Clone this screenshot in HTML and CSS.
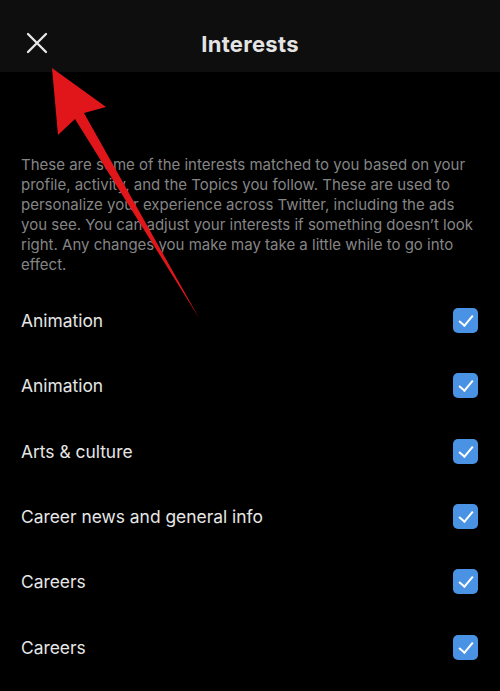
FILE: index.html
```html
<!DOCTYPE html>
<html lang="en">
<head>
  <meta charset="UTF-8" />
  <meta name="viewport" content="width=device-width, initial-scale=1.0" />
  <title>Interests</title>
  <link rel="stylesheet" href="styles.css">
</head>
<body>
  <header class="topbar">
    <button class="close" aria-label="Close">
      <svg width="22" height="22" viewBox="0 0 22 22">
        <path d="M2 2 L20 20 M20 2 L2 20" stroke="#e8e8e8" stroke-width="2.3" stroke-linecap="round" fill="none"/>
      </svg>
    </button>
    <h1>Interests</h1>
  </header>

  <p class="intro">These are some of the interests matched to you based on your profile, activity, and the Topics you follow. These are used to personalize your experience across Twitter, including the ads you see. You can adjust your interests if something doesn’t look right. Any changes you make may take a little while to go into effect.</p>

  <ul class="interests">
    <li><span>Animation</span><span class="check"></span></li>
    <li><span>Animation</span><span class="check"></span></li>
    <li><span>Arts &amp; culture</span><span class="check"></span></li>
    <li><span>Career news and general info</span><span class="check"></span></li>
    <li><span>Careers</span><span class="check"></span></li>
    <li><span>Careers</span><span class="check"></span></li>
  </ul>

  <!-- annotation arrow over the page -->
  <svg class="arrow" width="500" height="691" viewBox="0 0 500 691">
    <polygon points="52,68 106,107 84,113 199,318 75,119 58,135" fill="#e0161b"/>
  </svg>
</body>
</html>
```

FILE: styles.css
```css
body {
  margin: 0;
  background-color: #000;
  color: #e7e7e7;
  font-family: Inter, "Noto Sans", sans-serif;
  position: relative;
  height: 691px;
  overflow: hidden;
}

/* Header */
.topbar {
  height: 72px;
  box-sizing: border-box;
  padding-top: 16px;
  background-color: #0e0e0e;
  display: flex;
  align-items: center;
  justify-content: center;
  position: relative;
}

.topbar h1 {
  margin: 0;
  font-size: 22px;
  font-weight: 700;
  color: #e4e4e4;
  letter-spacing: 0.3px;
}

.close {
  position: absolute;
  left: 26px;
  top: 32px;
  padding: 0;
  border: none;
  background: none;
  width: 22px;
  height: 22px;
}

.close svg {
  display: block;
}

/* Intro text */
.intro {
  margin: 0;
  padding: 83px 21px 0;
  font-size: 15px;
  line-height: 20px;
  color: #858585;
}

/* Interest list */
.interests {
  list-style: none;
  margin: 13px 0 0;
  padding: 0;
}

.interests li {
  height: 65.3px;
  display: flex;
  align-items: center;
  justify-content: space-between;
  padding: 0 22px 0 21px;
  font-size: 17.4px;
  color: #e6e6e6;
}

.check {
  width: 25px;
  height: 25px;
  border-radius: 5px;
  background-color: #4a93e4;
  position: relative;
}

.check::after {
  content: "";
  position: absolute;
  left: 9px;
  top: 4px;
  width: 6px;
  height: 12px;
  border: solid #fff;
  border-width: 0 2px 2px 0;
  transform: rotate(40deg);
}

.arrow {
  position: absolute;
  left: 0;
  top: 0;
  pointer-events: none;
}
```
